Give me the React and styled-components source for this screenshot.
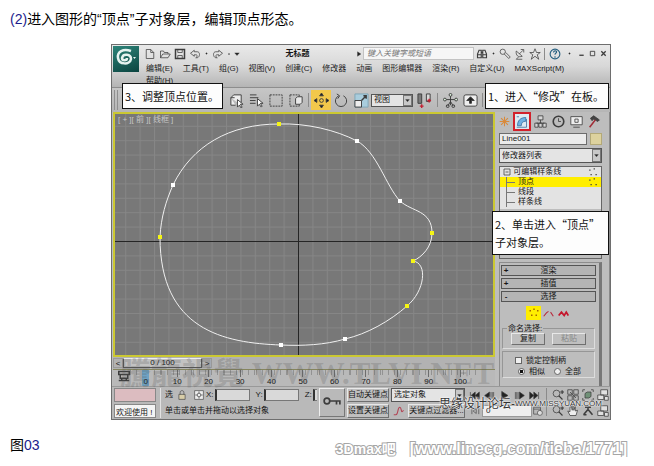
import React, { useState } from 'react';
import styled, { createGlobalStyle } from 'styled-components';

const GlobalStyle = createGlobalStyle`
  * {
    box-sizing: border-box;
  }

  body {
    margin: 0;
    background: #ffffff;
    color: #000000;
    font-family: 'Liberation Sans', 'Noto Sans CJK SC', sans-serif;
  }

  button, input, select {
    margin: 0;
    padding: 0;
    border: 0;
    border-radius: 0;
    background: transparent;
    color: inherit;
    font: inherit;
    appearance: none;
  }
`;

const Page = styled.main`
  padding: 11px 10px 0;
`;

const Lead = styled.p`
  margin: 0 0 17px;
  font-size: 14px;
  line-height: 16px;
`;

const StepNumber = styled.span`
  color: #1c1c8c;
`;

const Window = styled.section`
  position: relative;
  margin: 0 33px 0 101px;
  border: 1px solid #6e6e6e;
  background: #bdbdbd;
  font-size: 8px;
  line-height: 12px;
  color: #161616;
  white-space: nowrap;
`;

const Header = styled.header`
  display: flex;
  gap: 3px;
  height: 43px;
  padding: 1px;
  overflow: hidden;
  border-bottom: 1px solid #8d8d8d;
  background: linear-gradient(#e9e9e9, #d8d8d8 50%, #b4b4b4);
`;

const Logo = styled.button`
  flex: none;
  width: 26px;
  height: 26px;
  background: linear-gradient(160deg, #2d8479, #0b4440);
`;

const HeaderRows = styled.div`
  flex: 1;
  min-width: 0;
`;

const TitleBar = styled.div`
  display: flex;
  align-items: center;
  height: 15px;
`;

const IconGroup = styled.div`
  display: flex;
  align-items: center;
`;

const IconButton = styled.button`
  display: flex;
  flex: none;
  align-items: center;
  justify-content: center;
  width: ${props => props.$width || 15}px;
  height: ${props => props.$height || 14}px;
  border: ${props => (props.$framed ? '2px solid #d2212b' : '0')};
  background: ${props => props.$bg || 'transparent'};
`;

const Title = styled.h1`
  flex: 1;
  margin: 0;
  text-align: center;
  font-size: 8px;
  font-weight: 700;
`;

const Search = styled.input`
  width: 111px;
  height: 13px;
  padding: 0 3px;
  border: 1px solid #c3c3c3;
  background: #f6f6f6;
  font-style: italic;

  &::placeholder {
    color: #777777;
    opacity: 1;
  }
`;

const MenuBar = styled.nav`
  display: flex;
  flex-wrap: wrap;
  column-gap: 10px;
  padding: 2px 30px 0 4px;
`;

const MenuLink = styled.a`
  color: #222222;
  text-decoration: none;
`;

const Toolbar = styled.div`
  display: flex;
  align-items: center;
  height: 24px;
  padding-left: 2px;
  background: linear-gradient(#c6c6c6, #b6b6b6);
`;

const Grip = styled.span`
  width: 4px;
  height: 20px;
  margin-right: 108px;
  border: 1px solid #8f8f8f;
  border-width: 0 1px;
`;

const Separator = styled.span`
  flex: none;
  width: 1px;
  height: ${props => props.$height || 14}px;
  margin: 0 ${props => (props.$wide ? 2 : 1)}px;
  background: #8b8b8b;
`;

const SelectBox = styled.span`
  display: grid;
  flex: none;
  width: ${props => props.$width || '100%'};
  height: ${props => props.$height || 12}px;
  border: 1px solid #555555;
  background: #e4e4e4;

  > * {
    grid-area: 1 / 1;
  }

  select {
    width: 100%;
    padding-left: 2px;
    line-height: 10px;
  }
`;

const SelectArrow = styled.span`
  display: flex;
  align-items: center;
  justify-content: center;
  justify-self: end;
  width: 9px;
  border: 1px solid #777777;
  background: #c8c8c8;
  pointer-events: none;
`;

const Body = styled.div`
  display: flex;
  padding-left: 1px;
`;

const Stage = styled.div`
  flex: 1;
  min-width: 0;
`;

const Viewport = styled.div`
  display: grid;
  border: 2px solid #cbc832;
  background: #787878;

  > * {
    grid-area: 1 / 1;
  }

  svg {
    display: block;
    width: 100%;
    height: 241px;
  }
`;

const ViewLabel = styled.span`
  padding: 0 3px;
  color: #c6c6c6;
  z-index: 1;
`;

const TimeSlider = styled.div`
  display: flex;
  align-items: center;
  height: 12px;
  background: #b2b2b2;
`;

const SliderStep = styled.button`
  width: 10px;
  height: 10px;
  line-height: 10px;
  border: 1px solid #999999;
`;

const SliderHandle = styled.button`
  width: 79px;
  height: 10px;
  line-height: 8px;
  border: 1px solid #555555;
  border-top-color: #eeeeee;
  background: #c2c2c2;
`;

const Ruler = styled.div`
  display: flex;
  height: 17px;
  padding-right: 19px;
  border-top: 1px solid #85855e;
  background: #b9b9b9;
`;

const RulerTool = styled.button`
  flex: none;
  width: 17px;
  height: 16px;
  padding-left: 5px;
`;

const RulerCell = styled.span`
  display: flex;
  flex: 1;
  align-items: flex-end;
  justify-content: center;
  background:
    linear-gradient(#6d6d6d, #6d6d6d) 50% 0 / 1px 7px no-repeat,
    repeating-linear-gradient(90deg, #929292 0 1px, transparent 1px 6px) 0 0 / 100% 5px no-repeat;
  line-height: 8px;
`;

const CurrentFrame = styled.span`
  width: 7px;
  height: 16px;
  padding-top: 8px;
  text-align: center;
  background: #6fa3c4;
`;

const Panel = styled.aside`
  display: flex;
  flex: none;
  flex-direction: column;
  width: 115px;
  height: 274px;
  padding-right: 7px;
  border-right: 1px solid #8a8a8a;
`;

const PanelTabs = styled.div`
  display: flex;
  height: 20px;
`;

const PanelBody = styled.div`
  display: flex;
  flex: 1;
  flex-direction: column;
  gap: 3px;
  min-height: 0;
  padding-left: 4px;
`;

const NameRow = styled.div`
  display: flex;
  gap: 3px;
  padding-top: 1px;
`;

const NameInput = styled.input`
  flex: 1;
  min-width: 0;
  height: 12px;
  padding: 0 2px;
  border: 1px solid #6c6c6c;
  background: #ebebeb;
`;

const Swatch = styled.button`
  width: 12px;
  height: 12px;
  border: 1px solid #b3a978;
  background: #ddd29e;
`;

const Stack = styled.ul`
  height: 93px;
  margin: 0;
  padding: 0;
  list-style: none;
  border: 1px solid #666666;
  background: linear-gradient(#e3e3e3 0 42px, #bdbdbd 42px);
`;

const StackItem = styled.li`
  display: flex;
  align-items: center;
  height: 10px;
  padding: 0 3px;
  line-height: 10px;
  background: ${props => (props.$selected ? '#ffee00' : 'transparent')};
`;

const StackName = styled.span`
  flex: 1;
`;

const Branch = styled.span`
  width: 13px;
  height: 10px;
  margin-right: 2px;
  background:
    linear-gradient(#777777, #777777) 3px 5px / 9px 1px no-repeat,
    linear-gradient(#777777, #777777) 3px 0 / 1px 10px no-repeat;
`;

const Rollouts = styled.div`
  display: flex;
  flex: 1;
  flex-direction: column;
  gap: 2px;
  min-height: 0;
  overflow: hidden;
  padding: 2px 3px 0 1px;
  border: 1px solid #8d8d8d;
  border-bottom: 0;
  border-right: 3px solid #777777;
`;

const Rollout = styled.button`
  display: grid;
  flex: none;
  grid-template-columns: 8px 1fr 8px;
  height: 11px;
  line-height: 9px;
  border: 1px solid #555555;
  background: #b4b4b4;
`;

const SubObjects = styled.div`
  display: flex;
  flex: none;
  justify-content: center;
  padding: 2px 0;
`;

const Group = styled.fieldset`
  display: flex;
  flex: none;
  flex-wrap: wrap;
  justify-content: center;
  gap: 0 7px;
  min-width: 0;
  margin: 0 1px;
  padding: 0 2px 3px;
  border: 1px solid #969696;
  border-right-color: #dddddd;
  border-bottom-color: #dddddd;

  legend {
    margin-left: 2px;
    padding: 0 1px;
    line-height: 9px;
  }
`;

const PushButton = styled.button`
  width: ${props => props.$width || '34px'};
  height: ${props => props.$height || 12}px;
  line-height: 10px;
  border: 1px solid #6f6f6f;
  border-top-color: #e8e8e8;
  border-left-color: #e8e8e8;
  background: #bfbfbf;
  color: ${props => (props.disabled ? '#888888' : '#161616')};
`;

const Option = styled.label`
  display: flex;
  align-items: center;
  gap: 4px;
  line-height: 11px;
`;

const Tick = styled.input`
  width: 7px;
  height: 7px;
  border: 1px solid #666666;
  border-radius: ${props => (props.type === 'radio' ? '50%' : '0')};
  background: #f0f0f0;

  &:checked {
    background: radial-gradient(#111111 0 2px, #f0f0f0 2px);
  }
`;

const OptionGroup = styled(Group)`
  flex-direction: column;
  flex-wrap: nowrap;
  padding: 3px 0 0 12px;
`;

const RadioRow = styled.div`
  display: flex;
  gap: 9px;
  padding-left: 3px;
`;

const StatusBar = styled.footer`
  display: flex;
  gap: 2px;
  height: 33px;
  padding: 1px 0 1px 2px;
  border-top: 1px solid #999999;
  background: #b9b9b9;
`;

const StatusColumn = styled.div`
  display: flex;
  flex: none;
  flex-direction: column;
  gap: 2px;
  width: ${props => props.$width || 'auto'};
`;

const Recorder = styled.input`
  width: 100%;
  height: 14px;
  padding: 0 1px;
  border: 1px solid #888888;
  background: ${props => props.$bg};
`;

const Coordinates = styled.div`
  display: flex;
  flex: 1;
  flex-direction: column;
  gap: 2px;
  min-width: 0;
  margin-left: 2px;
  padding-left: 4px;
  border-left: 1px solid #e2e2e2;
  overflow: hidden;
`;

const CoordinateRow = styled.div`
  display: flex;
  align-items: center;
  height: 14px;
`;

const Coordinate = styled.label`
  display: flex;
  flex: none;
  align-items: center;
  gap: 1px;
  margin-right: 6px;

  input {
    width: 35px;
    height: 12px;
    border: 1px solid #777777;
    border-left: 2px solid #333333;
    background: #d9d9d9;
  }
`;

const Prompt = styled.p`
  margin: 0;
  line-height: 14px;
`;

const KeyButton = styled.button`
  flex: none;
  width: 26px;
  height: 29px;
  border: 1px solid #777777;
  border-top-color: #eeeeee;
  border-left-color: #eeeeee;
`;

const FilterRow = styled.div`
  display: flex;
  gap: 2px;
`;

const FrameInput = styled.input`
  width: 50px;
  height: 12px;
  padding: 0 3px;
  border: 1px solid #999999;
  background: #eeeeee;
`;

const Callout = styled.p`
  position: absolute;
  top: ${props => props.$top}px;
  left: ${props => props.$left || 'auto'};
  right: ${props => props.$right || 'auto'};
  z-index: 2;
  margin: 0;
  padding: 3px 2px;
  width: ${props => props.$width}px;
  border: 1px solid #111111;
  background: #fdfdfd;
  color: #111111;
  font-family: 'Noto Sans CJK SC', sans-serif;
  font-size: 11px;
  line-height: 18px;
`;

const Watermark = styled.span`
  position: absolute;
  bottom: 27px;
  left: 8px;
  color: rgba(85, 85, 85, 0.24);
  font-family: 'Liberation Serif', 'Noto Sans CJK TC', serif;
  font-size: 31px;
  font-weight: 700;
  line-height: 36px;
  pointer-events: none;
`;

const SiteMark = styled.span`
  position: absolute;
  right: 8px;
  bottom: 8px;
  display: flex;
  align-items: center;
  color: #333333;
  font-size: 12px;
  line-height: 14px;
  text-shadow: 0 0 1px #ffffff, 0 0 2px #ffffff, 0 0 2px #ffffff;
  pointer-events: none;

  small {
    font-size: 8px;
  }
`;

const PageFooter = styled.footer`
  display: flex;
  justify-content: space-between;
  align-items: flex-start;
  padding: 17px 17px 0 0;
  font-size: 14px;
  line-height: 16px;
`;

const Caption = styled.p`
  margin: 0;
`;

const Credit = styled.span`
  display: flex;
  align-items: baseline;
  gap: 14px;
  padding-top: 4px;
  color: #ffffff;
  font-weight: 700;
  -webkit-text-stroke: 2px #a6a6a6;
  paint-order: stroke fill;
`;

const CreditLink = styled.span`
  font-size: 16px;
`;

const icons = {
  fresh: <path d="M3 2h6l4 4v8H3zM9 2v4h4" />,
  open: <path d="M2 13V4h4l1 2h5v2M2 13l3-5h10l-3 5z" />,
  save: <><path d="M2 2h12v12H2z" strokeWidth="2" /><path d="M5 2v4h6V2M5 14v-4h6v4" /></>,
  undo: <path d="M2 7l5-4v2h4c4 0 4 7 0 8H9c3-2 2-4 0-4H7v2z" />,
  redo: <path d="M14 7L9 3v2H5c-4 0-4 7 0 8h2c-3-2-2-4 0-4h2v2z" />,
  dot: <circle cx="8" cy="8" r="1.5" fill="currentColor" />,
  down: <path d="M2 5h12l-6 7z" fill="currentColor" />,
  play: <path d="M4 2l9 6-9 6z" fill="currentColor" />,
  binoculars: <path d="M2 13V8l2-5h3v10zM9 13V3h3l2 5v5zM7 6h2M2 9h5M9 9h5" strokeWidth="1.5" />,
  key: <><circle cx="5" cy="5" r="3.5" /><path d="M7 8l6 6 2-2-6-6" /></>,
  dish: <path d="M3 4c-1 6 3 9 8 7zM7 8l5-5M9 2h4v4M6 12l-3 3h8" />,
  star: <path d="M8 1l2 5h5l-4 3 2 6-5-4-5 4 2-6-4-3h5z" />,
  help: <><circle cx="8" cy="8" r="6.5" stroke="#286080" strokeWidth="1.5" /><path d="M6 6c0-3 5-3 4 0-1 1-2 1-2 3M8 11v2" stroke="#286080" strokeWidth="1.5" /></>,
  minimize: <path d="M3 12h10" strokeWidth="3" />,
  maximize: <path d="M3 3h10v10H3z" strokeWidth="2" />,
  close: <path d="M3 3l10 10M13 3L3 13" strokeWidth="3" />,
  pick: <><path d="M2 5l3-3h8v8H9M2 5v8h5M2 5h4" fill="#eeeeee" /><path d="M9 7v8l2-2 2 3 1-1-2-3h3z" fill="#ffffff" /></>,
  byName: <><path d="M1 2h7M1 5h9M1 8h6M1 11h6" /><path d="M9 6v8l2-2 2 3 1-1-2-3h3z" fill="#ffffff" /></>,
  region: <path d="M1 2h13v12H1z" strokeDasharray="2 1" />,
  crossing: <><path d="M1 2h10v12H1z" strokeDasharray="2 1" /><path d="M7 6l2-2h5v6l-2 2H7z" fill="#e8e8e8" /></>,
  move: <><path d="M8 0l2 3H6zM8 16l-2-3h4zM0 8l3-2v4zM16 8l-3 2V6z" fill="#222222" /><circle cx="8" cy="8" r="2" /></>,
  rotate: <path d="M10 3a6 6 0 1 1-5 0M3 1l3 2-2 3" />,
  scale: <><path d="M1 1h14v14H1z" fill="#a9cddd" stroke="#7fa6b8" /><path d="M1 8h7v7H1z" fill="#eeeeee" /><path d="M8 8l5-5M10 3h3v3" strokeWidth="1.5" /></>,
  pivot: <><path d="M1 1h4v10H1z" fill="#7a7a7a" /><path d="M10 1h4v8h-4z" fill="#d9d9d9" /><path d="M5 12v4M3 14h4M13 6v4M11 8h4" stroke="#c32033" strokeWidth="1.5" /></>,
  manipulate: <><path d="M8 3v10M2 7h12M5 14l3-5 3 5" /><circle cx="8" cy="2" r="1.5" fill="#d8eed8" /><circle cx="2" cy="7" r="1.5" fill="#d8eed8" /><circle cx="14" cy="7" r="1.5" fill="#d8eed8" /><circle cx="5" cy="14" r="1.5" /><circle cx="11" cy="14" r="1.5" /></>,
  keyboard: <><rect x="1" y="2" width="14" height="12" rx="2" fill="#eeeeee" /><path d="M8 4l4 4H9v3H7V8H4z" fill="#222222" /></>,
  create: <path d="M8 1v14M1 8h14M3 3l10 10M13 3L3 13" stroke="#d98a3a" strokeWidth="1.5" />,
  modify: <><path d="M2 13C2 6 6 2 13 2v5c-4 0-6 2-6 6z" fill="#6fb2e4" stroke="#31689a" /><path d="M1 1h3M1 15h13V4" stroke="#31689a" /></>,
  hierarchy: <path d="M5 1h6v5H5zM8 6v4M3 10h10M1 10h4v5H1zM6 10h4v5H6zM11 10h4v5h-4z" fill="#d5d5d5" />,
  motion: <><circle cx="8" cy="8" r="6.5" strokeWidth="2" /><path d="M8 4v4h3" /></>,
  display: <><path d="M1 2h14v10H1zM4 15h8" fill="#eeeeee" /><path d="M6 5h4v4H6z" /></>,
  hammer: <><path d="M3 4l4-3 7 5-2 2-5-3-2 2z" fill="#444444" /><path d="M9 6l-7 9" stroke="#a12d37" strokeWidth="2" /></>,
  vertices: <path d="M2 5h2M7 3h2M12 5h2M4 11h2M10 11h2" stroke="#a56700" strokeWidth="2" />,
  stackDots: <path d="M2 5h2M9 3h2M4 12h2M12 12h2" strokeWidth="2" />,
  expand: <path d="M2 2h12v12H2zM5 8h6" strokeWidth="1.5" />,
  segment: <path d="M1 12l4-5 3-2M11 6l4 6" stroke="#b8283b" strokeWidth="1.5" />,
  spline: <path d="M1 11l4-5 4 5 3-5 3 5" stroke="#c5162c" strokeWidth="2.5" />,
  track: <path d="M1 2h14v4H1zM3 6v5h10V6M1 14h14M5 11v3M11 11v3" strokeWidth="2" />,
  lock: <><path d="M3 7h10v8H3z" fill="#d8cda8" /><path d="M5 7V4c0-4 6-4 6 0v3" /></>,
  absolute: <><path d="M1 1h14v14H1z" fill="#eeeeee" /><circle cx="8" cy="8" r="3" /><path d="M8 2v4M8 10v4M2 8h4M10 8h4" /></>,
  setKey: <path d="M6 8a2.5 2.5 0 1 0-5 0 2.5 2.5 0 0 0 5 0h9v3M12 8v3" strokeWidth="1.5" />,
  curve: <path d="M1 13h3C7 13 6 3 9 3s1 10 5 4" stroke="#b34454" strokeWidth="1.5" />,
  first: <path d="M2 3v10M9 3v10L3 8zM15 3v10L9 8z" fill="currentColor" />,
  previous: <path d="M8 3v10L1 8zM10 3v10M12 3v10M14 3v10" fill="currentColor" />,
  next: <path d="M8 3v10l7-5zM6 3v10M4 3v10M2 3v10" fill="currentColor" />,
  last: <path d="M14 3v10M7 3v10l6-5zM1 3v10l6-5z" fill="currentColor" />,
  keyMode: <path d="M3 3v10M10 4L5 8l5 4zM14 3v10" />,
  zoom: <><circle cx="6" cy="6" r="4.5" /><path d="M9 9l5 5M11 4h5M13.500 1.500v5" strokeWidth="1.500" /></>,
  zoomAll: <path d="M1 1h6v6H1zM9 1h6v6H9zM1 9h6v6H1zM9 9h6v6H9zM4 4l8 8" />,
  extents: <><path d="M1 4V1h3M12 1h3v3M15 12v3h-3M4 15H1v-3" /><path d="M4 6l3-2h5v6l-3 2H4z" fill="#719178" /></>,
  extentsAll: <path d="M5 1h9v7H5zM1 8h8v6H1zM10 10h5v5h-5z" fill="#e0e0e0" />,
  time: <><path d="M1 2h11v11H1zM1 5h11" /><circle cx="11" cy="11" r="4" fill="#dddddd" /></>,
  hand: <path d="M4 14L1 8l3 1V3l2-1 1 5V1l2 1v5l2-5v6l3-1-2 7z" fill="#eeeeee" />,
  orbit: <path d="M2 13L8 6l6 7M4 3h8M8 3v3M2 13h4" strokeWidth="2" />,
};

function Icon({ name, size = 12 }) {
  return (
    <svg width={size} height={size} viewBox="0 0 16 16" fill="none" stroke="#3d3d3d" color="#222222" aria-hidden="true">
      {icons[name]}
    </svg>
  );
}

function IconButtons({ items, width, height, size }) {
  return items.map(([name, label]) => (
    <IconButton key={label} type="button" aria-label={label} $width={width} $height={height}>
      <Icon name={name} size={size} />
    </IconButton>
  ));
}

function Dropdown({ label, options, width, height }) {
  return (
    <SelectBox $width={width} $height={height}>
      <select aria-label={label}>
        {options.map(option => <option key={option}>{option}</option>)}
      </select>
      <SelectArrow><Icon name="down" size={5} /></SelectArrow>
    </SelectBox>
  );
}

const menus = ['编辑(E)', '工具(T)', '组(G)', '视图(V)', '创建(C)', '修改器', '动画', '图形编辑器', '渲染(R)', '自定义(U)', 'MAXScript(M)', '帮助(H)'];

const frames = [0, 10, 20, 30, 40, 50, 60, 70, 80, 90, 100];

const vertices = [
  { x: 279, y: 124, selected: true },
  { x: 357, y: 141 },
  { x: 400, y: 201 },
  { x: 432, y: 233, selected: true },
  { x: 413, y: 261, selected: true },
  { x: 407, y: 306, selected: true },
  { x: 345, y: 339 },
  { x: 281, y: 345 },
  { x: 160, y: 237, selected: true },
  { x: 173, y: 185 },
];

const outline = `M279 124 C306 123 336 130 357 141 C377 152 386 186 400 201
  C412 212 432 210 432 233 C432 247 422 257 413 261 C428 263 425 291 407 306
  C390 321 367 334 345 339 C325 345 302 346 281 345
  C224 343 160 330 160 237 C161 217 166 201 173 185 C192 146 229 124 279 124`;

function SplineView() {
  return (
    <Viewport>
      <ViewLabel>[ + ][ 前 ][ 线框 ]</ViewLabel>
      <svg viewBox="115 114 378 241" preserveAspectRatio="none" aria-label="Line001">
        <defs>
          <pattern id="grid" x="298" y="241" width="14.4" height="14.4" patternUnits="userSpaceOnUse">
            <path d="M0 .5h14.400M.5 0v14.400" stroke="#868686" fill="none" />
          </pattern>
        </defs>
        <path d="M115 114h378v241H115z" fill="url(#grid)" />
        <path d="M115 241.500h378M298.500 114v241" stroke="#252525" />
        <path d={outline} fill="none" stroke="#f0f0f0" />
        {vertices.map(({ x, y, selected }) => (
          <rect key={`${x}-${y}`} x={x - 2} y={y - 2} width="4" height="4" fill={selected ? '#f5f514' : '#ffffff'} />
        ))}
      </svg>
    </Viewport>
  );
}

function CommandPanel() {
  const [align, setAlign] = useState('similar');

  return (
    <Panel>
      <PanelTabs>
        <IconButtons items={[['create', '创建']]} width={18} height={18} size={11} />
        <IconButton type="button" aria-label="修改" $width={18} $height={19} $framed $bg="#dceaf2">
          <Icon name="modify" size={12} />
        </IconButton>
        <IconButtons
          items={[['hierarchy', '层次'], ['motion', '运动'], ['display', '显示'], ['hammer', '工具']]}
          width={18}
          height={18}
          size={13}
        />
      </PanelTabs>
      <PanelBody>
        <NameRow>
          <NameInput aria-label="名称" defaultValue="Line001" />
          <Swatch type="button" aria-label="颜色" />
        </NameRow>
        <Dropdown label="修改器列表" options={['修改器列表']} height={15} />
        <Stack>
          <StackItem>
            <Icon name="expand" size={8} />
            <StackName>&nbsp;可编辑样条线</StackName>
            <Icon name="stackDots" size={10} />
          </StackItem>
          <StackItem $selected>
            <Branch />
            <StackName>顶点</StackName>
            <Icon name="stackDots" size={10} />
          </StackItem>
          <StackItem><Branch />线段</StackItem>
          <StackItem><Branch />样条线</StackItem>
        </Stack>
        <Rollouts>
          <Rollout type="button"><b>+</b>渲染</Rollout>
          <Rollout type="button"><b>+</b>插值</Rollout>
          <Rollout type="button"><b>-</b>选择</Rollout>
          <SubObjects>
            <IconButton type="button" aria-label="顶点" $bg="#ffee00"><Icon name="vertices" /></IconButton>
            <IconButtons items={[['segment', '线段'], ['spline', '样条线']]} size={11} />
          </SubObjects>
          <Group>
            <legend>命名选择:</legend>
            <PushButton type="button">复制</PushButton>
            <PushButton type="button" disabled>粘贴</PushButton>
          </Group>
          <OptionGroup>
            <Option><Tick type="checkbox" />锁定控制柄</Option>
            <RadioRow>
              <Option>
                <Tick type="radio" name="align" checked={align === 'similar'} onChange={() => setAlign('similar')} />
                相似
              </Option>
              <Option>
                <Tick type="radio" name="align" checked={align === 'all'} onChange={() => setAlign('all')} />
                全部
              </Option>
            </RadioRow>
          </OptionGroup>
        </Rollouts>
      </PanelBody>
    </Panel>
  );
}

function App() {
  return (
    <Page>
      <GlobalStyle />
      <Lead><StepNumber>(2)</StepNumber>进入图形的“顶点”子对象层，编辑顶点形态。</Lead>

      <Window>
        <Header>
          <Logo type="button" aria-label="菜单">
            <svg width="22" height="20" viewBox="0 0 22 20" fill="none" stroke="#e6f3f0">
              <path d="M16 4C8 1 2 5 3 11c1 7 12 7 13 1 0-5-8-6-9-1 0 3 5 3 5 0" strokeWidth="2.500" />
              <path d="M18 10h3l-1.500 2z" fill="#e6f3f0" strokeWidth="0" />
            </svg>
          </Logo>
          <HeaderRows>
            <TitleBar>
              <IconButtons items={[['fresh', '新建'], ['open', '打开'], ['save', '保存'], ['undo', '撤销']]} size={12} />
              <IconButtons items={[['dot', '撤销列表']]} width={8} size={7} />
              <IconButtons items={[['redo', '重做']]} size={12} />
              <IconButtons items={[['dot', '重做列表'], ['down', '自定义']]} width={8} size={6} />
              <Title>无标题</Title>
              <IconButtons items={[['play', '展开']]} width={9} size={6} />
              <Search aria-label="搜索" placeholder="键入关键字或短语" />
              <IconGroup>
                <IconButtons items={[['binoculars', '查找']]} size={12} />
                <IconButtons items={[['dot', '查找选项']]} width={8} size={7} />
                <IconButtons items={[['key', '速博'], ['dish', '通讯中心'], ['star', '收藏夹']]} size={12} />
                <Separator $height={12} $wide />
                <IconButtons items={[['help', '帮助']]} size={12} />
                <IconButtons items={[['dot', '帮助选项']]} width={14} size={7} />
                <IconButtons items={[['minimize', '最小化'], ['maximize', '最大化'], ['close', '关闭']]} width={11} size={7} />
              </IconGroup>
            </TitleBar>
            <MenuBar>
              {menus.map(menu => <MenuLink key={menu} href="#">{menu}</MenuLink>)}
            </MenuBar>
          </HeaderRows>
        </Header>

        <Toolbar>
          <Grip />
          <IconButtons
            items={[['pick', '选择对象'], ['byName', '按名称选择'], ['region', '矩形选择区域'], ['crossing', '窗口/交叉']]}
            width={20}
            height={20}
            size={15}
          />
          <Separator $wide />
          <IconButton type="button" aria-label="选择并移动" $width={20} $height={20} $bg="#f2c84b">
            <Icon name="move" size={15} />
          </IconButton>
          <IconButtons items={[['rotate', '选择并旋转'], ['scale', '选择并缩放']]} width={20} height={20} size={15} />
          <Dropdown label="参考坐标系" options={['视图']} width="42px" height={13} />
          <IconButtons items={[['pivot', '使用轴点中心']]} width={22} height={20} size={15} />
          <Separator $wide />
          <IconButtons items={[['manipulate', '选择并操纵'], ['keyboard', '键盘快捷键覆盖']]} width={20} height={20} size={15} />
          <Separator $wide />
        </Toolbar>

        <Body>
          <Stage>
            <SplineView />
            <TimeSlider>
              <SliderStep type="button" aria-label="上一帧">&lt;</SliderStep>
              <SliderHandle type="button">0 / 100</SliderHandle>
              <SliderStep type="button" aria-label="下一帧">&gt;</SliderStep>
            </TimeSlider>
            <Ruler>
              <RulerTool type="button" aria-label="轨迹栏"><Icon name="track" size={12} /></RulerTool>
              {frames.map(frame => (
                <RulerCell key={frame}>
                  {frame === 0 ? <CurrentFrame>0</CurrentFrame> : frame}
                </RulerCell>
              ))}
            </Ruler>
          </Stage>
          <CommandPanel />
        </Body>

        <StatusBar>
          <StatusColumn $width="42px">
            <Recorder aria-label="宏录制器" $bg="#dcbcc0" />
            <Recorder aria-label="侦听器" defaultValue="欢迎使用 !" $bg="#f4f4f4" />
          </StatusColumn>
          <Coordinates>
            <CoordinateRow>
              选
              <IconButtons items={[['lock', '锁定选择']]} width={18} size={10} />
              <IconButtons items={[['absolute', '绝对模式']]} size={10} />
              <Coordinate>X:<input type="text" /></Coordinate>
              <Coordinate>Y:<input type="text" /></Coordinate>
              <Coordinate>Z:<input type="text" /></Coordinate>
            </CoordinateRow>
            <Prompt>单击或单击并拖动以选择对象</Prompt>
          </Coordinates>
          <KeyButton type="button" aria-label="设置关键点"><Icon name="setKey" size={18} /></KeyButton>
          <StatusColumn $width="42px">
            <PushButton type="button" $width="100%" $height={14}>自动关键点</PushButton>
            <PushButton type="button" $width="100%" $height={14}>设置关键点</PushButton>
          </StatusColumn>
          <StatusColumn $width="74px">
            <Dropdown label="选择集" options={['选定对象']} height={14} />
            <FilterRow>
              <IconButtons items={[['curve', '切线']]} height={14} />
              <PushButton type="button" $width="57px" $height={14}>关键点过滤器...</PushButton>
            </FilterRow>
          </StatusColumn>
          <StatusColumn $width="76px">
            <IconGroup>
              <IconButtons
                items={[['first', '转至开头'], ['previous', '上一关键帧'], ['play', '播放'], ['next', '下一关键帧'], ['last', '转至结尾']]}
                size={11}
              />
            </IconGroup>
            <IconGroup>
              <IconButtons items={[['keyMode', '关键点模式']]} size={10} />
              <FrameInput aria-label="当前帧" defaultValue="0" />
              <IconButtons items={[['time', '时间配置']]} width={11} size={10} />
            </IconGroup>
          </StatusColumn>
          <Separator $height={28} />
          <StatusColumn $width="60px">
            <IconGroup>
              <IconButtons items={[['zoom', '缩放'], ['zoomAll', '缩放所有视图'], ['extents', '最大化显示'], ['extentsAll', '所有视图最大化显示']]} />
            </IconGroup>
            <IconGroup>
              <IconButtons items={[['zoom', '缩放区域'], ['hand', '平移视图'], ['orbit', '环绕'], ['extentsAll', '最大化视口切换']]} />
            </IconGroup>
          </StatusColumn>
        </StatusBar>

        <Watermark>騰龍視覺 WWW.TLVI.NET</Watermark>
        <SiteMark>思缘设计论坛-<small>WWW.MISSYUAN.COM</small></SiteMark>
        <Callout $top={38} $left="10px" $width={101}>3、调整顶点位置。</Callout>
        <Callout $top={38} $right="1px" $width={124}>1、进入“修改”在板。</Callout>
        <Callout $top={166} $right="1px" $width={117}>2、单击进入“顶点”<br />子对象层。</Callout>
      </Window>

      <PageFooter>
        <Caption>图<StepNumber>03</StepNumber></Caption>
        <Credit>3Dmax吧<CreditLink>[www.linecg.com/tieba/1771]</CreditLink></Credit>
      </PageFooter>
    </Page>
  );
}

export default App;
